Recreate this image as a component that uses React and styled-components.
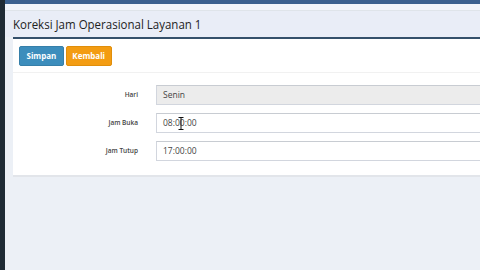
import React from "react";
import styled, { createGlobalStyle } from "styled-components";

const Global = createGlobalStyle`
  html, body { margin: 0; padding: 0; }
  body { background: #ecf0f5; font-family: "Open Sans", "Liberation Sans", sans-serif; overflow: hidden; }
`;

const Shell = styled.div`
  display: flex;
  width: 480px;
  height: 270px;
  overflow: hidden;
`;

const Sidebar = styled.div`
  width: 5px;
  flex: none;
  background: #1f2b35;
`;

const Main = styled.div`
  flex: 1;
  display: flex;
  flex-direction: column;
  min-width: 0;
  background: #ecf0f6;
`;

const TopBar = styled.div`
  height: 4px;
  background: #3b6190;
`;

const Strip = styled.div`
  height: 6px;
  background: #f1f5fb;
  border-bottom: 1px solid #dfe4ea;
`;

const Header = styled.div`
  height: 26px;
  padding-left: 8px;
  background: #e9edf7;
  display: flex;
  align-items: center;
`;

const Title = styled.h1`
  margin: 0;
  font-family: "Open Sans", "Liberation Sans", sans-serif;
  font-size: 11.5px;
  font-weight: 400;
  color: #222;
  transform: scaleY(1.06);
  transform-origin: left center;
`;

const Card = styled.div`
  margin-left: 8px;
  background: #fff;
  border-top: 2px solid #34506b;
  border-bottom: 2px solid #e2e5ea;
  height: 140px;
  box-sizing: border-box;
  overflow: hidden;
`;

const Toolbar = styled.div`
  display: flex;
  gap: 2px;
  padding: 7px 6px 6px;
  border-bottom: 1px solid #f1f1f1;
`;

const Button = styled.button`
  height: 20px;
  padding: 0 ${(p) => p.$px}px;
  border: 1px solid ${(p) => p.$border};
  background: ${(p) => p.$bg};
  color: #fff;
  border-radius: 2px;
  font-family: "Open Sans", "Liberation Sans", sans-serif;
  font-size: 8px;
  font-weight: 700;
  line-height: 18px;
`;

const Form = styled.div`
  display: grid;
  grid-template-columns: 125px 1fr;
  column-gap: 18px;
  row-gap: 8px;
  padding-top: 12px;
`;

const Label = styled.label`
  text-align: right;
  font-size: 6.5px;
  font-weight: 600;
  color: #444;
  line-height: 20px;
`;

const Field = styled.div`
  position: relative;
  height: 20px;
  margin-right: -12px;
  border: 1px solid #d2d6de;
  border-top-color: #c8ccd2;
  background: ${(p) => (p.$disabled ? "#ececec" : "#fff")};
  box-sizing: border-box;
  padding-left: 6px;
  font-size: 8.5px;
  color: #444;
  line-height: 18px;
`;

const Cursor = styled.svg`
  position: absolute;
  left: 21px;
  top: 3px;
`;

export default function App() {
  return (
    <Shell>
      <Global />
      <Sidebar />
      <Main>
        <TopBar />
        <Strip />
        <Header>
          <Title>Koreksi Jam Operasional Layanan 1</Title>
        </Header>
        <Card>
          <Toolbar>
            <Button $bg="#3c8dbc" $border="#367fa9" $px={6.5}>Simpan</Button>
            <Button $bg="#f39c12" $border="#e08e0b" $px={5.5}>Kembali</Button>
          </Toolbar>
          <Form>
            <Label>Hari</Label>
            <Field $disabled>Senin</Field>
            <Label>Jam Buka</Label>
            <Field>
              08:00:00
              <Cursor width="6" height="13" viewBox="0 0 6 13">
                <path d="M0.5 0.5h5M3 0.5v12M0.5 12.5h5" stroke="#111" strokeWidth="1" fill="none" />
              </Cursor>
            </Field>
            <Label>Jam Tutup</Label>
            <Field>17:00:00</Field>
          </Form>
        </Card>
      </Main>
    </Shell>
  );
}
